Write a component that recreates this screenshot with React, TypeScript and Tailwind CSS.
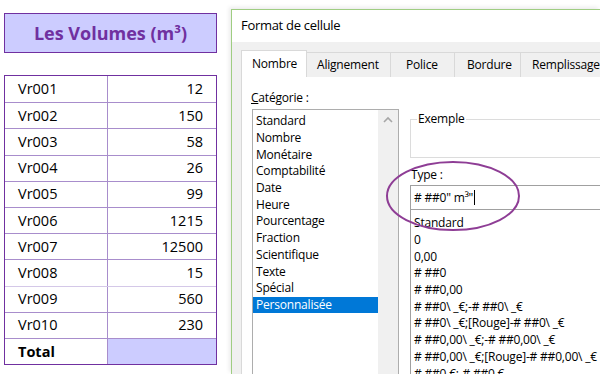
const rows = [
  ['Vr001', '12'],
  ['Vr002', '150'],
  ['Vr003', '58'],
  ['Vr004', '26'],
  ['Vr005', '99'],
  ['Vr006', '1215'],
  ['Vr007', '12500'],
  ['Vr008', '15'],
  ['Vr009', '560'],
  ['Vr010', '230'],
]

const categories = [
  'Standard',
  'Nombre',
  'Monétaire',
  'Comptabilité',
  'Date',
  'Heure',
  'Pourcentage',
  'Fraction',
  'Scientifique',
  'Texte',
  'Spécial',
  'Personnalisée',
]

const formats = [
  'Standard',
  '0',
  '0,00',
  '# ##0',
  '# ##0,00',
  '# ##0\\ _€;-# ##0\\ _€',
  '# ##0\\ _€;[Rouge]-# ##0\\ _€',
  '# ##0,00\\ _€;-# ##0,00\\ _€',
  '# ##0,00\\ _€;[Rouge]-# ##0,00\\ _€',
  '# ##0 €;-# ##0 €',
]

function Sheet() {
  return (
    <div className="w-[217px] shrink-0 pl-[4px] pt-[13px] text-black">
      <div className="flex h-[40px] w-[213px] items-center justify-center border border-[#7030a0] bg-[#ccccff] text-[18px] font-bold text-[#7030a0]">
        Les Volumes (m³)
      </div>

      <div className="mt-[22px] w-[213px] border border-[#7030a0] text-[14.5px]">
        {rows.map(([name, value], i) => (
          <div
            key={name}
            className={`flex h-[26.2px] items-center ${
              i === 0 ? '' : i === 8 ? 'border-t border-[#d4c8e8]' : 'border-t border-[#a88dcc]'
            }`}
          >
            <div className="w-[102px] pl-[13px]">{name}</div>
            <div className="flex h-full flex-1 items-center justify-end border-l border-[#a88dcc] pr-[13px]">
              {value}
            </div>
          </div>
        ))}
        <div className="flex h-[26.2px] items-center border-t border-[#a88dcc]">
          <div className="w-[102px] pl-[13px] font-bold">Total</div>
          <div className="h-full flex-1 border-l border-[#a88dcc] bg-[#ccccff]" />
        </div>
      </div>
    </div>
  )
}

function Dialog() {
  return (
    <div className="mt-[9px] ml-[14px] flex h-[365px] min-w-0 flex-1 flex-col border-t border-l border-[#9fcd82] bg-[#f0f0f0] shadow-[-2px_-2px_4px_rgba(0,0,0,0.08)] text-[12px] tracking-[-0.2px] text-black">
      <div className="flex h-[32px] shrink-0 items-center bg-white pl-[9px] text-[13px] tracking-[-0.3px]">
        Format de cellule
      </div>

      <div className="flex min-h-0 flex-1 flex-col pt-[8px] pl-[9px]">
        {/* onglets */}
        <div className="flex h-[27px] shrink-0 items-end">
          <div className="flex h-[27px] w-[66px] shrink-0 items-center border-x border-t border-[#d9d9d9] bg-white pl-[10px]">
            Nombre
          </div>
          <div className="flex h-[25px] w-[84px] shrink-0 items-center border-t border-r border-[#d9d9d9] pl-[10px]">
            Alignement
          </div>
          <div className="flex h-[25px] w-[64px] shrink-0 items-center border-t border-r border-[#d9d9d9] pl-[15px]">
            Police
          </div>
          <div className="flex h-[25px] w-[66px] shrink-0 items-center border-t border-r border-[#d9d9d9] pl-[12px]">
            Bordure
          </div>
          <div className="flex h-[25px] w-[100px] shrink-0 items-center border-t border-r border-[#d9d9d9] pl-[11px]">
            Remplissage
          </div>
        </div>

        <div className="flex min-h-0 flex-1 border-l border-[#d9d9d9] bg-white">
          <div className="w-[157px] shrink-0 pt-[12px] pl-[9px]">
            <div className="h-[18px] leading-[18px]">
              <span className="underline">C</span>atégorie :
            </div>
            <div className="mt-[2px] ml-[1px] flex h-[300px] w-[147px] border border-[#adadad]">
              <div className="flex-1 pt-[3px]">
                {categories.map((c) => (
                  <div
                    key={c}
                    className={`flex h-[16.7px] items-center pl-[3px] whitespace-nowrap ${
                      c === 'Personnalisée' ? 'bg-[#0078d7] text-white' : ''
                    }`}
                  >
                    {c}
                  </div>
                ))}
              </div>
              <div className="w-[20px] bg-[#f0f0f0] pt-[6px]">
                <svg width="20" height="8" viewBox="0 0 20 8">
                  <polyline points="6,6 10,2 14,6" fill="none" stroke="#a6a6a6" strokeWidth="1.6" />
                </svg>
              </div>
            </div>
          </div>

          <div className="ml-[11px] w-[260px] shrink-0">
            <fieldset className="mt-[34px] h-[47px] border border-[#dcdcdc] px-[6px]">
              <legend className="px-[1px] leading-[16px]">Exemple</legend>
            </fieldset>
            <div className="mt-[8px] h-[18px] pl-[1px] leading-[18px]">Type :</div>
            <div className="mt-[1px] flex h-[25px] items-center border border-[#a0a0a0] pl-[3px]">
              <span className="whitespace-pre">{'# ##0" m³"'}</span>
              <span className="ml-[1px] h-[15px] border-l border-black" />
            </div>
            <div className="h-[200px] border-x border-[#a0a0a0] pt-[5px]">
              {formats.map((f) => (
                <div key={f} className="flex h-[16.7px] items-center pl-[3px] whitespace-pre">
                  {f}
                </div>
              ))}
            </div>
          </div>
        </div>
      </div>
    </div>
  )
}

export default function App() {
  return (
    <div className="relative flex h-[374px] w-[600px] overflow-hidden bg-white font-['Open_Sans',sans-serif]">
      <Sheet />
      <Dialog />
      <svg className="pointer-events-none absolute top-[160px] left-[385px]" width="136" height="72" viewBox="0 0 136 72">
        <ellipse cx="68" cy="36" rx="66" ry="34" fill="none" stroke="#8e3d95" strokeWidth="2" />
      </svg>
    </div>
  )
}
